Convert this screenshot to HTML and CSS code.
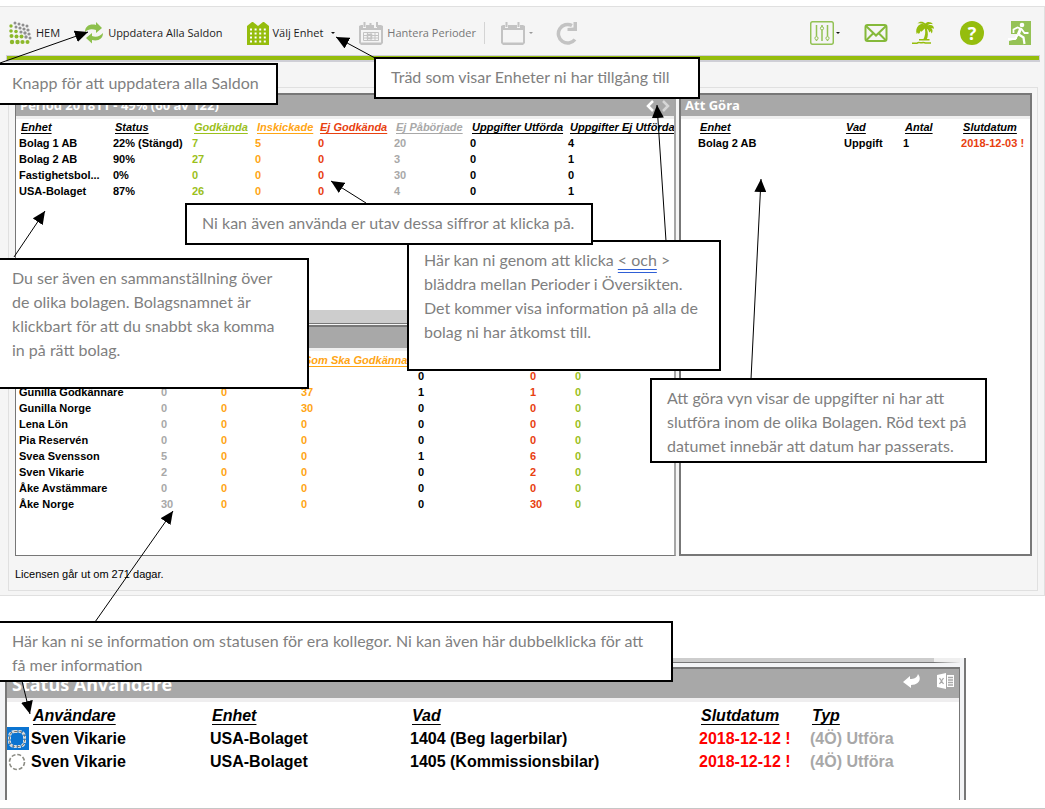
FILE: index.html
```
<!DOCTYPE html>
<html lang="sv">
<head>
<meta charset="utf-8">
<title>Översikt</title>
<link rel="stylesheet" href="styles.css">
</head>
<body>
<div class="page">
  <main class="app">
    <header class="toolbar">
      <nav class="tools tools-main">
        <button class="tool" type="button">
          <svg class="icon" width="23" height="24" viewBox="0 0 23 24">
            <g fill="#8f8f8f"><circle cx="6" cy="2" r="1.5"/><circle cx="10" cy="3" r="1.5"/><circle cx="14" cy="4" r="1.5"/><circle cx="18" cy="5" r="1.5"/><circle cx="7" cy="6" r="1.5"/><circle cx="11" cy="7" r="1.6"/><circle cx="15" cy="8" r="1.6"/><circle cx="19" cy="9" r="1.6"/><circle cx="12" cy="11" r="1.6"/><circle cx="16" cy="12" r="1.7"/><circle cx="20" cy="13" r="1.6"/><circle cx="17" cy="16" r="1.7"/><circle cx="21" cy="17" r="1.5"/></g>
            <g fill="#8cb82b"><circle cx="2" cy="5" r="1.7"/><circle cx="2" cy="10" r="1.8"/><circle cx="7" cy="10.500" r="1.8"/><circle cx="2.500" cy="15" r="2"/><circle cx="7.500" cy="15.500" r="2"/><circle cx="12.500" cy="15.500" r="2"/><circle cx="3" cy="21" r="2.200"/><circle cx="8.500" cy="21" r="2.200"/><circle cx="13.500" cy="21" r="2.100"/><circle cx="18.500" cy="21" r="2"/></g>
          </svg>
          <span>HEM</span>
        </button>
        <button class="tool" type="button">
          <svg class="icon" width="20" height="24" viewBox="0 0 20 24" fill="#8dc04c">
            <path d="M1 11C1 5 6 2.500 12 4V1l6 6-6 5V9C8 7.500 4 8 1 11z"/>
            <path d="M19 12c0 6-5 8.500-11 7v3.500L2 17l6-5v3c4 1.500 8 .5 11-3z"/>
          </svg>
          <span>Uppdatera Alla Saldon</span>
        </button>
        <button class="tool" type="button">
          <svg class="icon" width="22" height="24" viewBox="0 0 22 24">
            <path fill="#95bd0d" d="M0 5l5-4 1 0 5 4 5-4h1l5 4v19H0z"/>
            <g stroke="#fff" stroke-width="2" stroke-dasharray="2 2.600"><path d="M3 8.500h17M3 12.500h17M3 16.500h17M3 20.500h17"/></g>
          </svg>
          <span>Välj Enhet</span>
          <span class="caret"></span>
        </button>
        <button class="tool dim" type="button">
          <svg class="icon" width="24" height="24" viewBox="0 0 24 24">
            <path fill="#c3c3c3" fill-rule="evenodd" d="M2 4h2v3h3V4h8v3h3V4h4l2 1v17l-2 2H2l-2-2V5zM2 9v12.500h20V9z"/>
            <path stroke="#c3c3c3" stroke-width="2" d="M5.500 1v5M18 1v5M11.500 2v3"/>
            <path fill="none" stroke="#c3c3c3" d="M4.500 11.500h15v8h-15zM4 14.500h16M4 17h16M8.500 11v9M12 11v9M16 11v9"/>
            <path fill="none" stroke="#c3c3c3" stroke-width="1.500" d="M8.500 13.500h4v4h-4z"/>
          </svg>
          <span>Hantera Perioder</span>
        </button>
      </nav>
      <span class="separator"></span>
      <nav class="tools tools-period">
        <button class="tool" type="button" aria-label="Period">
          <svg class="icon" width="24" height="24" viewBox="0 0 24 24">
            <path fill="#c3c3c3" fill-rule="evenodd" d="M2 4h2v3h3V4h9v3h3V4h3l2 1v17l-2 2H2l-2-2V5zM2 9v12.500h20V9z"/>
            <path stroke="#c3c3c3" stroke-width="2" d="M5.500 1v5M17.500 1v5"/>
          </svg>
          <span class="caret caret-dim"></span>
        </button>
        <button class="tool" type="button" aria-label="Ladda om">
          <svg class="icon" width="24" height="24" viewBox="0 0 24 24">
            <path fill="none" stroke="#c3c3c3" stroke-width="3.500" d="M17 4.500A9.300 9.300 0 1 0 20 18.500"/>
            <path fill="#c3c3c3" d="M22 1v9h-9.500V7l6-.5V1z"/>
          </svg>
        </button>
      </nav>
      <nav class="tools tools-right">
        <button class="tool" type="button" aria-label="Inställningar">
          <svg class="icon" width="24" height="24" viewBox="0 0 24 24" fill="none" stroke="#93c255">
            <rect x=".7" y=".7" width="22.600" height="22.600" rx="2" stroke-width="1.500"/>
            <path stroke-width="1.500" d="M6.500 4v11.500M6.500 19v1M12 4v2M12 9v11M17.500 4v11.500M17.500 19v1"/>
            <circle cx="6.500" cy="17.200" r="1.600"/><circle cx="12" cy="7.300" r="1.600"/><circle cx="17.500" cy="17.200" r="1.600"/>
          </svg>
          <span class="caret"></span>
        </button>
        <button class="tool" type="button" aria-label="Meddelanden">
          <svg class="icon" width="24" height="24" viewBox="0 0 24 24" fill="none" stroke="#85b93a" stroke-width="2">
            <rect x="1.500" y="4" width="21" height="16" rx="2"/><path d="M2 5l10 9.500L22 5M2 19.500l7.500-7.500M22 19.500L14.500 12"/>
          </svg>
        </button>
        <button class="tool" type="button" aria-label="Semester">
          <svg class="icon" width="24" height="24" viewBox="0 0 24 24">
            <path fill="#95bd0d" d="M13 4.500C11.500 2.500 8.500 2.300 6.500 4.500c-2 2-3 5-1.800 8.500.6-.2 1-.8 1.200-1.400l.8 1.400c1.200-.8 1.500-2 1.800-3.200l1 1c1-.9 2-2 3.200-3.300C13.800 11 13.300 15 11 19h3.500c1.800-3.500 1.700-7.500.4-11.300 1.300.8 2 2 2.200 3.800.7-.2 1.200-.8 1.400-1.400l1.200 2.400c1.300-2 1-4-.4-5.500l2.700.8C22 4.500 19.500 3.300 15.500 4.500 17 3 19 2.700 21 3.200 19 .3 15 .2 13.200 2.600 11 .2 7.500.3 5.500 2.500 8.500 1.800 11 2.500 13 4.500z"/>
            <path fill="none" stroke="#95bd0d" stroke-width="1.500" d="M7 18.700h10.500M0 22.300h5c2-2.300 3 .3 5-.6s3 .9 5 .2h4"/>
          </svg>
        </button>
        <button class="tool help" type="button" aria-label="Hjälp"><span class="help-disc">?</span></button>
        <button class="tool" type="button" aria-label="Logga ut">
          <svg class="icon" width="24" height="24" viewBox="0 0 24 24">
            <path fill="#95c255" d="M3 0h20v24H1v-4l8-2V0z"/><path fill="#95c255" d="M3 0h8v13H3z"/>
            <circle cx="14" cy="4" r="2.300" fill="#fff"/>
            <path fill="none" stroke="#fff" stroke-width="1.800" d="M5.500 12V8.500l4-2 4 1.500 3 4h4"/>
            <path fill="none" stroke="#fff" stroke-width="3" d="M12.500 8L10 14"/>
            <path fill="none" stroke="#fff" stroke-width="2.200" d="M10 13l5.500 3.500 1 6.500M9.500 14L7 18H0"/>
          </svg>
        </button>
      </nav>
    </header>
    <div class="accent"></div>

    <section class="workspace">
      <div class="panels">
        <div class="column">
          <section class="panel panel-period">
            <header class="panel-head">
              <h2>Period 201811 - 49% (60 av 122)</h2>
              <div class="pager">
                <button type="button" aria-label="Föregående period"><svg width="8" height="12" viewBox="0 0 8 12"><path fill="none" stroke="#fff" stroke-width="2.500" d="M7 1L2 6l5 5"/></svg></button>
                <button type="button" aria-label="Nästa period"><svg width="8" height="12" viewBox="0 0 8 12"><path fill="none" stroke="#d6d6d6" stroke-width="2.500" d="M1 1l5 5-5 5"/></svg></button>
              </div>
            </header>
            <table class="grid grid-period">
              <colgroup><col class="w94"><col class="w79"><col class="w63"><col class="w63"><col class="w76"><col class="w76"><col class="w98"><col></colgroup>
              <thead><tr><th>Enhet</th><th>Status</th><th class="green">Godkända</th><th class="orange">Inskickade</th><th class="red">Ej Godkända</th><th class="grey">Ej Påbörjade</th><th>Uppgifter Utförda</th><th>Uppgifter Ej Utförda</th></tr></thead>
              <tbody>
                <tr><td>Bolag 1 AB</td><td>22% (Stängd)</td><td class="green">7</td><td class="orange">5</td><td class="red">0</td><td class="grey">20</td><td>0</td><td>4</td></tr>
                <tr><td>Bolag 2 AB</td><td>90%</td><td class="green">27</td><td class="orange">0</td><td class="red">0</td><td class="grey">3</td><td>0</td><td>1</td></tr>
                <tr><td>Fastighetsbol...</td><td>0%</td><td class="green">0</td><td class="orange">0</td><td class="red">0</td><td class="grey">30</td><td>0</td><td>0</td></tr>
                <tr><td>USA-Bolaget</td><td>87%</td><td class="green">26</td><td class="orange">0</td><td class="red">0</td><td class="grey">4</td><td>0</td><td>1</td></tr>
              </tbody>
            </table>
            <div class="scrollbar"></div>
          </section>
          <section class="panel panel-users">
            <header class="panel-head"></header>
            <table class="grid grid-users">
              <colgroup><col class="w142"><col class="w60"><col class="w80"><col class="w117"><col class="w112"><col class="w45"><col></colgroup>
              <thead><tr><th></th><th></th><th></th><th class="orange">Som Ska Godkännas</th><th></th><th></th><th></th></tr></thead>
              <tbody>
                <tr><td></td><td></td><td></td><td></td><td>0</td><td class="red">0</td><td class="green">0</td></tr>
                <tr><td>Gunilla Godkännare</td><td class="grey">0</td><td class="orange">0</td><td class="orange">37</td><td>1</td><td class="red">1</td><td class="green">0</td></tr>
                <tr><td>Gunilla Norge</td><td class="grey">0</td><td class="orange">0</td><td class="orange">30</td><td>0</td><td class="red">0</td><td class="green">0</td></tr>
                <tr><td>Lena Lön</td><td class="grey">0</td><td class="orange">0</td><td class="orange">0</td><td>0</td><td class="red">0</td><td class="green">0</td></tr>
                <tr><td>Pia Reservén</td><td class="grey">0</td><td class="orange">0</td><td class="orange">0</td><td>0</td><td class="red">0</td><td class="green">0</td></tr>
                <tr><td>Svea Svensson</td><td class="grey">5</td><td class="orange">0</td><td class="orange">0</td><td>1</td><td class="red">6</td><td class="green">0</td></tr>
                <tr><td>Sven Vikarie</td><td class="grey">2</td><td class="orange">0</td><td class="orange">0</td><td>0</td><td class="red">2</td><td class="green">0</td></tr>
                <tr><td>Åke Avstämmare</td><td class="grey">0</td><td class="orange">0</td><td class="orange">0</td><td>0</td><td class="red">0</td><td class="green">0</td></tr>
                <tr><td>Åke Norge</td><td class="grey">30</td><td class="orange">0</td><td class="orange">0</td><td>0</td><td class="red">30</td><td class="green">0</td></tr>
              </tbody>
            </table>
          </section>
        </div>
        <section class="panel panel-todo">
          <header class="panel-head"><h2>Att Göra</h2></header>
          <table class="grid grid-todo">
            <colgroup><col class="w14"><col class="w146"><col class="w59"><col class="w58"><col></colgroup>
            <thead><tr><th></th><th>Enhet</th><th>Vad</th><th>Antal</th><th>Slutdatum</th></tr></thead>
            <tbody><tr><td></td><td>Bolag 2 AB</td><td>Uppgift</td><td>1</td><td class="red">2018-12-03 !</td></tr></tbody>
          </table>
        </section>
      </div>
      <p class="license">Licensen går ut om 271 dagar.</p>
    </section>
  </main>

  <section class="detail">
    <div class="detail-scroll"></div>
    <div class="detail-panel">
      <header class="detail-head">
        <h2>Status Användare</h2>
        <div class="detail-tools">
          <button type="button" aria-label="Tillbaka"><svg width="18" height="16" viewBox="0 0 18 16"><path fill="#fff" d="M0 9l7-6v3c4 0 7-1 8-5 4 5 1 11-7 11l0 3z"/></svg></button>
          <button type="button" aria-label="Exportera till Excel"><svg width="18" height="16" viewBox="0 0 18 16"><path fill="#fff" d="M0 2l9-2v16l-9-2zM10 2h7v12h-7z"/><path fill="none" stroke="#a8a8a8" stroke-width="1.300" d="M2.500 5l4 6M6.500 5l-4 6M11 4.500h5M11 7h5M11 9.500h5M11 12h5"/></svg></button>
        </div>
      </header>
      <table class="detail-grid">
        <colgroup><col class="w22"><col class="w179"><col class="w200"><col class="w289"><col class="w111"><col></colgroup>
        <thead><tr><th></th><th>Användare</th><th>Enhet</th><th>Vad</th><th>Slutdatum</th><th>Typ</th></tr></thead>
        <tbody>
          <tr><td class="mark selected"><svg width="18" height="18" viewBox="0 0 18 18" fill="none"><rect x="1.500" y="1.500" width="15" height="15" rx="5" stroke="#d9dde0" stroke-width="3" stroke-dasharray="3 1"/><rect x="1.500" y="1.500" width="15" height="15" rx="5" stroke="#76736b" stroke-dasharray="3 2"/></svg></td><td>Sven Vikarie</td><td>USA-Bolaget</td><td>1404 (Beg lagerbilar)</td><td class="alert">2018-12-12 !</td><td class="grey">(4Ö) Utföra</td></tr>
          <tr><td class="mark"><svg width="18" height="18" viewBox="0 0 18 18" fill="none"><circle cx="9" cy="9" r="7.500" stroke="#8b8b83" stroke-width="1.600" stroke-dasharray="4 1.900"/></svg></td><td>Sven Vikarie</td><td>USA-Bolaget</td><td>1405 (Kommissionsbilar)</td><td class="alert">2018-12-12 !</td><td class="grey">(4Ö) Utföra</td></tr>
        </tbody>
      </table>
    </div>
  </section>

  <svg class="arrows" width="1045" height="809" viewBox="0 0 1045 809">
    <defs><marker id="head" markerUnits="userSpaceOnUse" markerWidth="14" markerHeight="12" refX="13" refY="6" orient="auto"><path d="M0 0l13 6-13 6z"/></marker></defs>
    <g stroke="#000">
      <path marker-end="url(#head)" d="M0 63L88 32"/>
      <path marker-end="url(#head)" d="M375 58L336 37"/>
      <path marker-end="url(#head)" d="M366 203L331 181"/>
      <path marker-end="url(#head)" d="M14 257L45 211"/>
      <path marker-end="url(#head)" d="M666 241L657 105"/>
      <path marker-end="url(#head)" d="M751 379L761 179"/>
      <path marker-end="url(#head)" d="M95 622L173 511"/>
      <path marker-end="url(#head)" d="M22 681L30 714"/>
    </g>
  </svg>

  <aside class="note note-update">Knapp för att uppdatera alla Saldon</aside>
  <aside class="note note-tree">Träd som visar Enheter ni har tillgång till</aside>
  <aside class="note note-pager">Här kan ni genom att klicka <span class="grammar">&lt; och</span> &gt;<br>bläddra mellan Perioder i Översikten.<br>Det kommer visa information på alla de<br>bolag ni har åtkomst till.</aside>
  <aside class="note note-numbers">Ni kan även använda er utav dessa siffror at klicka på.</aside>
  <aside class="note note-companies">Du ser även en sammanställning över<br>de olika bolagen. Bolagsnamnet är<br>klickbart för att du snabbt ska komma<br>in på rätt bolag.</aside>
  <aside class="note note-todo">Att göra vyn visar de uppgifter ni har att<br>slutföra inom de olika Bolagen. Röd text på<br>datumet innebär att datum har passerats.</aside>
  <aside class="note note-status">Här kan ni se information om statusen för era kollegor. Ni kan även här dubbelklicka för att<br>få mer information</aside>
</div>
</body>
</html>
```

FILE: styles.css
```
* { box-sizing: border-box; }

body {
  margin: 0;
  background: #fff;
  color: #000;
  font-family: "Liberation Sans", Arial, sans-serif;
}

button {
  border: 0;
  padding: 0;
  background: none;
  color: inherit;
  font: inherit;
}

h2, p { margin: 0; }
svg { display: block; flex: none; }

.page {
  position: relative;
  padding-top: 6px;
  overflow: hidden;
  border-bottom: 1px solid #c6c6c6;
}

/* Application frame */
.app {
  border: 1px solid #e0e0e0;
  border-left: 0;
  background: #f5f5f5;
  padding: 0 6px 4px 8px;
}

.toolbar {
  display: flex;
  align-items: center;
  gap: 16px;
  height: 48px;
  padding: 4px 6px 0 1px;
  font: 11px/16px "Open Sans", "Noto Sans", sans-serif;
  color: #1c1c1c;
}
.tools { display: flex; align-items: center; }
.tools-main { gap: 24px; }
.tools-period { gap: 22px; }
.tools-right { gap: 24px; margin-left: auto; }
.tool {
  display: flex;
  align-items: center;
  gap: 4px;
  white-space: nowrap;
}
.tools-right .tool { gap: 2px; }
.dim { color: #777; }
.caret {
  border: 2px solid transparent;
  border-top-color: #111;
  border-bottom: 0;
  margin-left: 4px;
}
.tools-right .caret { margin-left: 0; }
.caret-dim { border-top-color: #999; margin-left: 0; }
.separator { width: 1px; height: 22px; margin-left: -8px; background: #d4d4d4; }
.help-disc {
  width: 24px;
  height: 24px;
  border-radius: 50%;
  background: #95bd0d;
  color: #fff;
  font: bold 18px/24px "Open Sans", sans-serif;
  text-align: center;
}

.accent {
  height: 7px;
  margin: 0 -2px;
  border: 1px solid #cfcfd6;
  border-bottom-width: 2px;
  background: #95bd0d;
}

.workspace {
  margin-top: 25px;
  border: 1px solid #e0e0e0;
  padding: 5px;
}

/* Panels */
.panels { display: flex; gap: 3px; padding-left: 1px; }
.column {
  flex: 665 1 0;
  min-width: 0;
  display: flex;
  flex-direction: column;
  gap: 1px;
}
.panel {
  border: 1px solid #777;
  border-top-width: 2px;
  background: #fff;
  overflow: hidden;
}
.panel-period, .panel-users {
  display: flex;
  flex-direction: column;
  min-height: 231px;
  border-right: 2px solid #a6a6a6;
}
.panel-todo { flex: 351 1 0; min-width: 0; border-width: 2px; }
.panel-head {
  display: flex;
  align-items: center;
  justify-content: space-between;
  height: 24px;
  padding: 0 4px;
  border-bottom: 3px solid #efefef;
  background: #a8a8a8;
}
.panel-head h2 {
  color: #fff;
  font: bold 13px/18px "Open Sans", "Noto Sans", sans-serif;
  padding-bottom: 2px;
}
.pager { display: flex; gap: 8px; }
.scrollbar { height: 13px; margin-top: auto; background: #cdcdcd; }

.grid {
  width: 100%;
  table-layout: fixed;
  border-collapse: collapse;
  font-size: 11px;
  line-height: 16px;
  font-weight: bold;
}
.grid th, .grid td {
  height: 16px;
  padding: 0 0 0 3px;
  text-align: left;
  white-space: nowrap;
}
.grid th {
  padding-left: 5px;
  font-style: italic;
  text-decoration: underline;
  text-underline-offset: 2px;
}
.grid-users { margin-top: 1px; }
.grid-users th { padding-left: 0; }
.grid-users th:nth-child(4) { padding-left: 6px; }

.green { color: #9bc01c; }
.orange { color: #ffa514; }
.red { color: #e8400f; }
.grey { color: #a8a8a8; }
.alert { color: #f00; }

.w14 { width: 14px; }
.w22 { width: 22px; }
.w45 { width: 45px; }
.w58 { width: 58px; }
.w59 { width: 59px; }
.w60 { width: 60px; }
.w63 { width: 63px; }
.w76 { width: 76px; }
.w79 { width: 79px; }
.w80 { width: 80px; }
.w94 { width: 94px; }
.w98 { width: 98px; }
.w111 { width: 111px; }
.w112 { width: 112px; }
.w117 { width: 117px; }
.w142 { width: 142px; }
.w146 { width: 146px; }
.w179 { width: 179px; }
.w200 { width: 200px; }
.w289 { width: 289px; }

.license {
  padding: 10px 1px 3px;
  font-size: 11px;
  line-height: 16px;
}

/* User status detail */
.detail {
  margin: 62px 79px 8px 0;
  border-right: 2px solid #777;
  padding: 0 4px 0 5px;
  background: #f3f4f6;
}
.detail-scroll {
  height: 5px;
  border-right: 26px solid #efefef;
  border-bottom: 1px solid #777;
  background: #cdcdcd;
}
.detail-panel {
  min-height: 133px;
  margin-top: 4px;
  border: 2px solid #777;
  border-bottom: 0;
  border-right-width: 1px;
  background: #fff;
}
.detail-head {
  display: flex;
  align-items: center;
  justify-content: space-between;
  height: 33px;
  padding: 0 4px 0 5px;
  border-bottom: 4px solid #efeeef;
  background: #a8a8a8;
}
.detail-head h2 {
  color: #fff;
  font: bold 18px/26px "Open Sans", "Noto Sans", sans-serif;
}
.detail-tools { display: flex; gap: 16px; padding-bottom: 6px; }
.detail-grid {
  width: 100%;
  margin-top: 2px;
  table-layout: fixed;
  border-collapse: collapse;
  font-size: 16px;
  line-height: 23px;
  font-weight: bold;
}
.detail-grid th, .detail-grid td {
  height: 23px;
  padding: 0 0 0 2px;
  text-align: left;
  white-space: nowrap;
}
.detail-grid th {
  padding-left: 4px;
  font-style: italic;
  text-decoration: underline;
  text-underline-offset: 3px;
}
.detail-grid .mark { padding: 0 1px; }
.selected { background: #0b74d1; }

/* Notes laid over the application */
.arrows {
  position: absolute;
  top: 0;
  left: 0;
  pointer-events: none;
}
.note {
  position: absolute;
  border: 2px solid #000;
  padding: 6px 15px;
  background: #fff;
  color: #7f7f7f;
  font: 16px/24px Lato, "Open Sans", sans-serif;
  white-space: nowrap;
}
.note-update, .note-companies, .note-status {
  left: 0;
  border-left: 0;
  padding-left: 12px;
}
.note-update { top: 63px; width: 278px; height: 42px; }
.note-tree { top: 57px; left: 374px; width: 326px; height: 42px; }
.note-numbers { top: 203px; left: 185px; width: 408px; height: 42px; }
.note-companies { top: 258px; width: 309px; height: 131px; }
.note-pager { top: 240px; left: 407px; width: 314px; height: 131px; }
.note-todo { top: 378px; left: 650px; width: 337px; height: 85px; }
.note-status { top: 621px; width: 673px; height: 61px; }
.grammar {
  text-decoration: underline double #2f5fd6;
  text-underline-offset: 3px;
}
```
